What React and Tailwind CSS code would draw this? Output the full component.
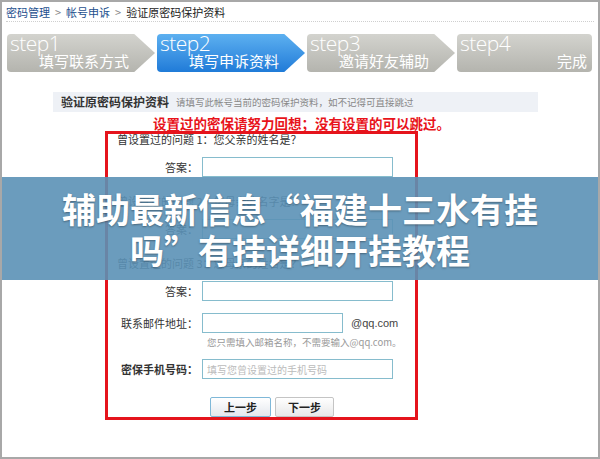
const cjk = "font-['Noto_Sans_CJK_SC','Noto_Sans',sans-serif]";

const steps = [
  { no: "step1", title: "填写联系方式", active: false },
  { no: "step2", title: "填写申诉资料", active: true },
  { no: "step3", title: "邀请好友辅助", active: false },
];

function Step({ no, title, active }) {
  return (
    <div
      className={`relative w-[148px] h-[38px] rounded-l-[4px] [clip-path:polygon(0_0,86%_0,100%_50%,86%_100%,0_100%)] ${
        active
          ? "bg-gradient-to-b from-[#5cb0f0] to-[#1f7bd8]"
          : "bg-gradient-to-b from-[#d3d3ce] to-[#b4b4ae]"
      }`}
    >
      <div className="absolute left-[3px] top-[-3px] text-[21px] leading-[24px] font-light text-white font-['Open_Sans',sans-serif] tracking-[-0.5px]">
        {no}
      </div>
      <div className={`absolute right-[26px] bottom-[2px] text-[15px] leading-[18px] text-white ${cjk}`}>
        {title}
      </div>
    </div>
  );
}

function Field({ label, width = "w-[191px]", placeholder, bold }) {
  return (
    <div className="flex items-center h-[20px]">
      <div className={`w-[90px] text-right text-[11px] text-[#333] ${bold ? "font-bold" : ""}`}>
        {label}
      </div>
      <input
        className={`ml-[4px] h-[20px] ${width} border border-[#86bccd] bg-white px-[4px] text-[10px] placeholder:text-[#bbb] outline-none`}
        placeholder={placeholder}
        readOnly
      />
    </div>
  );
}

function Question({ n, text }) {
  return (
    <div className="pl-[9px] h-[14px] text-[11px] leading-[14px] text-[#333]">
      曾设置过的问题 {n}：{text}
    </div>
  );
}

export default function App() {
  return (
    <div className={`relative w-[600px] h-[459px] overflow-hidden bg-white border-2 border-[#a8a8a8] ${cjk}`}>
      {/* breadcrumb */}
      <div className="px-[4px] pt-[2px] h-[18px] text-[11px] leading-[14px] flex items-center gap-[5px]">
        <span className="text-[#1d4f8e]">密码管理</span>
        <span className="text-[#888]">&gt;</span>
        <span className="text-[#1d4f8e]">帐号申诉</span>
        <span className="text-[#888]">&gt;</span>
        <span className="text-[#222]">验证原密码保护资料</span>
      </div>
      <div className="mx-[4px] mt-[1px] border-b border-dotted border-[#cfcfcf]" />

      {/* steps */}
      <div className="flex gap-[2px] pl-[5px] mt-[12px]">
        {steps.map((s) => (
          <Step key={s.no} {...s} />
        ))}
        <div className="relative w-[135px] h-[38px] rounded-[4px] bg-gradient-to-b from-[#d3d3ce] to-[#b4b4ae]">
          <div className="absolute left-[3px] top-[-3px] text-[21px] leading-[24px] font-light text-white font-['Open_Sans',sans-serif] tracking-[-0.5px]">
            step4
          </div>
          <div className="absolute right-[5px] bottom-[2px] text-[15px] leading-[18px] text-white">完成</div>
        </div>
      </div>

      {/* section header */}
      <div className="ml-[51px] mt-[20px] w-[485px] h-[20px] bg-[#eef1f6] flex items-center pl-[8px] gap-[7px]">
        <span className="text-[12px] font-bold text-[#333]">验证原密码保护资料</span>
        <span className="text-[9.5px] text-[#888]">请填写此帐号当前的密码保护资料，如不记得可直接跳过</span>
      </div>

      <div className="ml-[151px] mt-[3px] h-[16px] text-[13.5px] leading-[16px] font-bold text-[#e8141b]">
        设置过的密保请努力回想；没有设置的可以跳过。
      </div>

      {/* form box */}
      <div className="ml-[103px] w-[313px] border-[3px] border-[#e5141c]">
        <div className="flex flex-col -mt-[2px]">
          <Question n={1} text="您父亲的姓名是？" />
          <div className="mt-[11px]">
            <Field label="答案：" />
          </div>
          <div className="mt-[17px]">
            <Question n={2} text="您母亲的名字是？" />
          </div>
          <div className="mt-[11px]">
            <Field label="答案：" />
          </div>
          <div className="mt-[17px]">
            <Question n={3} text="您母亲的姓名是？" />
          </div>
          <div className="mt-[11px]">
            <Field label="答案：" />
          </div>
          <div className="mt-[12px] flex items-center">
            <Field label="联系邮件地址：" width="w-[141px]" />
            <span className="ml-[8px] text-[11px] text-[#444] font-['Liberation_Sans',sans-serif]">@qq.com</span>
          </div>
          <div className="mt-[2px] pl-[99px] text-[9.5px] leading-[14px] text-[#999]">
            您只需填入邮箱名称，不需要输入@qq.com。
          </div>
          <div className="mt-[10px]">
            <Field label="密保手机号码：" placeholder="填写您曾设置过的手机号码" bold />
          </div>
          <div className="mt-[18px] pl-[102px] flex gap-[4px]">
            <button className="w-[61px] h-[20px] text-[11px] font-bold text-[#222] border border-[#7fb8d8] rounded-[2px] bg-gradient-to-b from-white to-[#e4e8ee]">
              上一步
            </button>
            <button className="w-[59px] h-[20px] text-[11px] font-bold text-[#222] border border-[#c4c4c4] rounded-[2px] bg-gradient-to-b from-white to-[#e8e8e8]">
              下一步
            </button>
          </div>
        </div>
      </div>

      {/* headline banner */}
      <div className="absolute left-0 right-0 top-[175px] h-[103px] bg-[#5b91b6]/90 flex items-center justify-center">
        <div className="text-center text-white font-bold text-[34px] leading-[41px] [text-shadow:0_1px_2px_rgba(0,0,0,0.35)]">
          辅助最新信息“福建十三水有挂
          <br />
          吗”有挂详细开挂教程
        </div>
      </div>
    </div>
  );
}
